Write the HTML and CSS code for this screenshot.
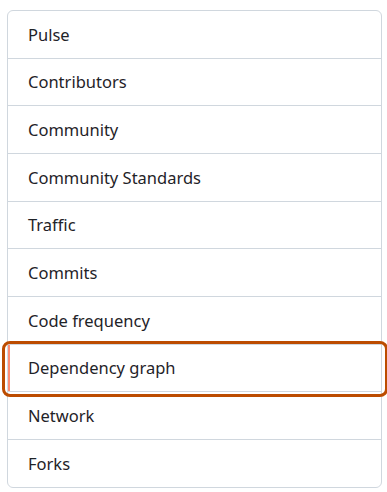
FILE: index.html
```html
<!DOCTYPE html>
<html lang="en">
<head>
    <meta charset="UTF-8">
    <title>Insights</title>
    <link rel="stylesheet" href="styles.css">
</head>
<body>
    <nav class="menu">
        <a class="menu-item" href="#">Pulse</a>
        <a class="menu-item" href="#">Contributors</a>
        <a class="menu-item" href="#">Community</a>
        <a class="menu-item" href="#">Community Standards</a>
        <a class="menu-item" href="#">Traffic</a>
        <a class="menu-item" href="#">Commits</a>
        <a class="menu-item" href="#">Code frequency</a>
        <a class="menu-item selected" href="#">Dependency graph</a>
        <a class="menu-item" href="#">Network</a>
        <a class="menu-item" href="#">Forks</a>
    </nav>
</body>
</html>
```

FILE: styles.css
```css
body { margin: 0; background: #fff; font-family: "Noto Sans", "Open Sans", sans-serif; }
.menu {
    margin: 10px 7px 0 7px;
    width: 373px;
    border: 1px solid #d0d7de;
    border-radius: 6px;
    display: flex;
    flex-direction: column;
}
.menu-item {
    position: relative;
    display: flex;
    align-items: center;
    box-sizing: border-box;
    height: 47.67px;
    padding-left: 20px;
    border-top: 1px solid #d0d7de;
    color: #1f2328;
    font-size: 16.5px;
    text-decoration: none;
}
.menu-item:first-child { border-top: 0; height: 46.67px; }
.menu-item.selected { box-shadow: inset 2px 0 0 #fd8c73; }
/* orange callout round the selected row */
.menu-item.selected::after {
    content: "";
    position: absolute;
    left: -6px;
    right: -7px;
    top: -4px;
    bottom: -6px;
    border: 3px solid #bc4c00;
    border-radius: 8px;
}
```
